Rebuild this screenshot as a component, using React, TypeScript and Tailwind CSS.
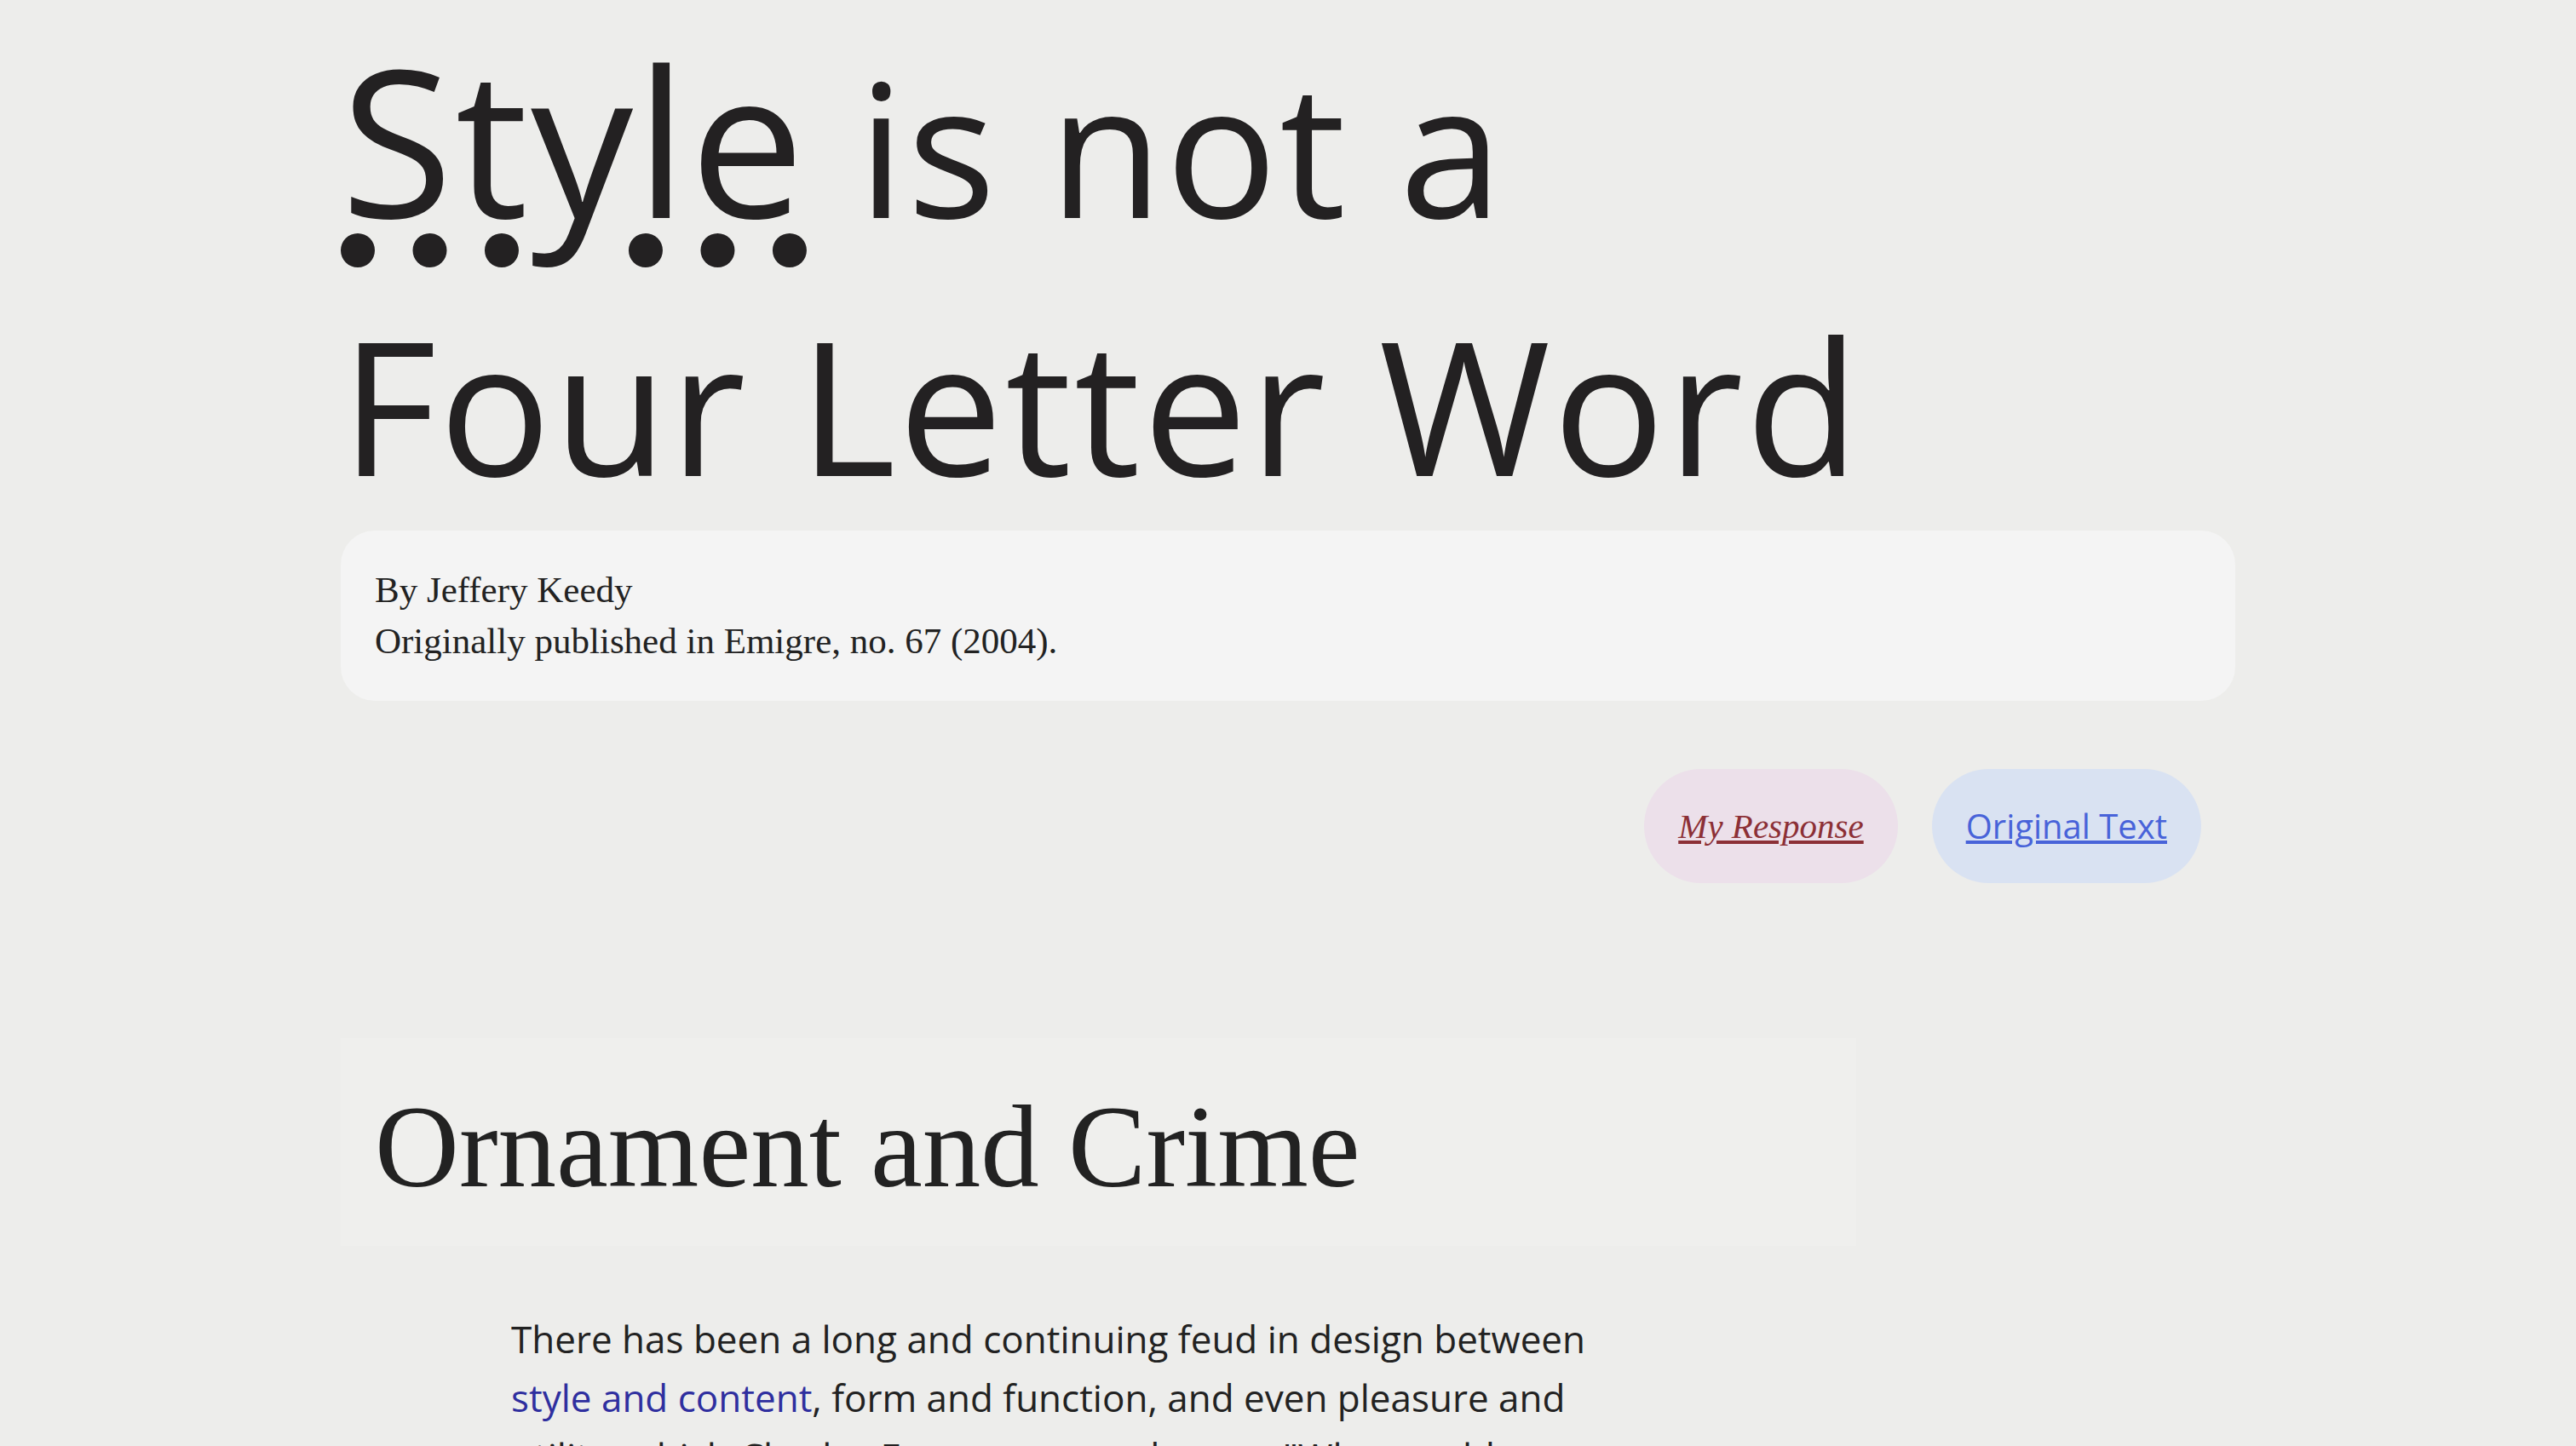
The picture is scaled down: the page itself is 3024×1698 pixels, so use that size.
const sans = "font-['Open_Sans',sans-serif]";
const serif = "font-['Liberation_Serif',serif]";

const Title = () => (
  <h1 className={`${sans} text-[218px] leading-[normal] font-normal tracking-[3px] text-[#232122] m-0`}>
    <span className="text-[1.1em] underline decoration-dotted decoration-[40px] underline-offset-[18px]">
      Style
    </span>{" "}
    is not a
    <br />
    Four Letter Word
  </h1>
);

const Byline = () => (
  <div className={`${serif} bg-[#f4f4f4] rounded-[40px] px-10 py-10 text-[43px] leading-[60px] text-[#222]`}>
    <p>By Jeffery Keedy</p>
    <p>Originally published in Emigre, no. 67 (2004).</p>
  </div>
);

const Switcher = () => (
  <div className="mt-20 flex justify-end gap-10 pr-10">
    <a
      href="#response"
      className={`${serif} italic rounded-full bg-[#ece0ea] px-10 py-10 text-[41px] leading-[54px] text-[#8c3036] underline`}
    >
      My Response
    </a>
    <a
      href="#original"
      className={`${sans} rounded-full bg-[#d9e2f2] px-10 py-10 text-[40px] leading-[54px] text-[#4863d9] underline`}
    >
      Original Text
    </a>
  </div>
);

export default function App() {
  return (
    <div className="min-h-screen bg-[#ededeb] overflow-hidden">
      <div className="mx-auto w-[2224px]">
        <Title />
        <Byline />
        <Switcher />

        <section className="mt-[182px]">
          <div className="w-4/5 bg-[#efefed] px-10 pt-[52px] pb-10">
            <h2 className={`${serif} text-[137px] leading-[152px] text-[#222]`}>Ornament and Crime</h2>
          </div>

          <p className={`${sans} mt-[75px] ml-[200px] w-[1320px] text-[44px] leading-[69px] text-[#222]`}>
            There has been a long and continuing feud in design between{" "}
            <a href="#style" className="text-[#2f2f9f]">
              style and content
            </a>
            , form and function, and even pleasure and utility, which Charles Eames summed up as, "Who would say
            that pleasure is not useful?" Designers have always had a hard time taking style seriously.
          </p>
        </section>
      </div>
    </div>
  );
}
